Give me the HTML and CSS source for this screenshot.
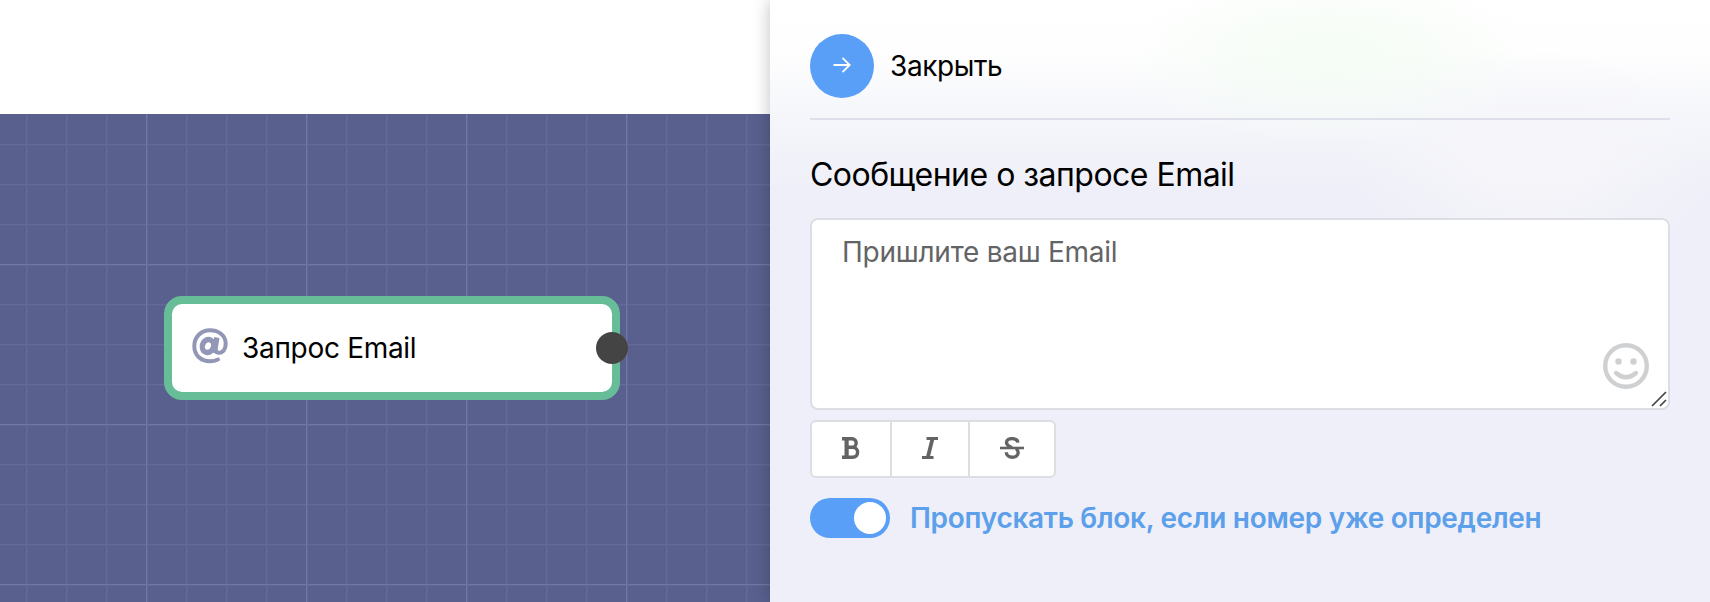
FILE: index.html
```html
<!DOCTYPE html>
<html lang="ru">
<head>
<meta charset="utf-8">
<title>Запрос Email</title>
<link rel="stylesheet" href="styles.css">
</head>
<body>
<div class="app">
  <main class="workspace">
    <header class="topbar"></header>
    <section class="canvas">
      <div class="node">
        <svg class="node-icon" width="36" height="36" viewBox="0 0 36 36" fill="none" stroke="#9397b7" stroke-linecap="round">
          <path stroke-width="4" d="M26 31.500C23.500 32.700 21 33.200 18 33.200C8.500 33.200 2.300 27 2.300 18S9 2.300 18 2.300S33.700 8 33.700 15.500C33.700 21 31 24.800 27.500 24.800C25.500 24.800 24 24 24 22.500"/>
          <ellipse cx="16" cy="18" rx="5.600" ry="6.600" transform="rotate(22 16 18)" stroke-width="5.400"/>
          <path stroke-width="5.400" stroke-linecap="butt" d="M24.800 9.500L22.300 25"/>
        </svg>
        <span class="node-title">Запрос Email</span>
        <span class="node-port"></span>
      </div>
    </section>
  </main>
  <aside class="panel">
    <header class="panel-head">
      <button class="close" type="button">
        <svg width="18" height="16" viewBox="0 0 18 16" fill="none" stroke="#fff" stroke-width="1.800"><path d="M.5 8H16.500M9.500 .8L16.700 8L9.500 15.200"/></svg>
      </button>
      <span class="close-label">Закрыть</span>
    </header>
    <h2 class="heading">Сообщение о запросе Email</h2>
    <div class="message">
      <span class="message-text">Пришлите ваш Email</span>
      <svg class="smile" width="46" height="46" viewBox="0 0 46 46" fill="none" stroke="#cfd0d2" stroke-width="4.400" stroke-linecap="round">
        <circle cx="23" cy="23" r="20.800"/><path d="M13 30Q23 38.500 33 30"/>
        <g fill="#cfd0d2" stroke="none"><circle cx="15.500" cy="18.500" r="3.200"/><circle cx="30.500" cy="18.500" r="3.200"/></g>
      </svg>
      <svg class="grip" width="16" height="16" viewBox="0 0 16 16" stroke="#444" stroke-width="1.700"><path d="M1 15L15 1M9 15L15 9"/></svg>
    </div>
    <div class="toolbar">
      <button class="tool" type="button">
        <svg width="18" height="22" viewBox="0 0 18 22" fill="none" stroke="#636466" stroke-width="3.400"><path d="M0 1.700H10C15.500 1.700 15.500 10.300 10 10.300H4.500M10.500 10.300C17.300 10.300 17.300 20.300 10.500 20.300H0"/><path stroke-width="4.200" d="M4.600 1.700V20.300"/></svg>
      </button>
      <button class="tool" type="button">
        <svg width="18" height="22" viewBox="0 0 18 22" fill="none" stroke="#636466" stroke-width="2.800"><path d="M5.500 1.500H17M1 20.500H12.500"/><path stroke-width="3.800" d="M11.500 1.500L6.800 20.500"/></svg>
      </button>
      <button class="tool tool-wide" type="button">
        <svg width="24" height="22" viewBox="0 0 24 22" fill="none" stroke="#636466" stroke-width="3.400"><path d="M0 11H24" stroke-width="2.600"/><path d="M17.800 5.600C17.200 .4 6.800 .2 6.500 5.400C6.500 8 8.800 9.200 12 10.500M6.300 15.200C6.300 21.800 18.200 21.800 18.200 15.500C18.200 13.500 17.500 12.500 16 11.500"/></svg>
      </button>
    </div>
    <label class="switch-row">
      <span class="switch"><span class="knob"></span></span>
      <span class="switch-label">Пропускать блок, если номер уже определен</span>
    </label>
  </aside>
</div>
</body>
</html>
```
FILE: styles.css
```css
* { box-sizing: border-box; }
body {
  margin: 0;
  font-family: Inter, "Liberation Sans", sans-serif;
  font-size: 28px;
  line-height: 34px;
  color: #000;
}
button { padding: 0; border: 0; background: none; }
svg { display: block; flex: none; }
.app { display: flex; width: 1710px; height: 602px; overflow: hidden; }
.workspace { display: flex; flex-direction: column; width: 770px; }
.topbar { height: 114px; background: #fff; }
.canvas {
  flex: 1;
  padding: 182px 0 0 164px;
  background-color: #59608e;
  background-image:
    linear-gradient(90deg, #7177a5 1px, #626896 1px, #626896 2px, transparent 2px),
    linear-gradient(#7177a5 1px, #626896 1px, #626896 2px, transparent 2px),
    linear-gradient(90deg, #646a98 1px, #5d6491 1px, #5d6491 2px, transparent 2px),
    linear-gradient(#646a98 1px, #5d6491 1px, #5d6491 2px, transparent 2px);
  background-size: 160px 160px, 160px 160px, 40px 40px, 40px 40px;
  background-position: 146px 0, 0 150px, 26px 0, 0 30px;
}
.node {
  position: relative;
  display: flex;
  align-items: center;
  gap: 14px;
  width: 456px;
  height: 104px;
  padding-left: 20px;
  border: 8px solid #68bd99;
  border-radius: 18px;
  background: #fff;
}
.node-icon { margin-top: -5px; }
.node-title { letter-spacing: -0.3px; }
.node-port {
  position: absolute;
  right: -16px;
  top: 28px;
  width: 32px;
  height: 32px;
  border-radius: 50%;
  background: #444;
}
.panel {
  position: relative;
  width: 940px;
  padding: 34px 40px 0;
  box-shadow: 0 0 16px rgba(0, 0, 0, .25);
  background:
    radial-gradient(ellipse 210px 90px at 560px 56px, rgba(244, 252, 244, .8) 20%, rgba(246, 252, 246, 0)),
    radial-gradient(ellipse 190px 110px at 765px 160px, rgba(246, 246, 250, .8) 30%, rgba(246, 246, 250, 0)),
    linear-gradient(#fff 0, #fefefe 50px, #f6f7fb 110px, #eeeff8 190px, #eeeff8 100%);
}
.panel-head {
  display: flex;
  gap: 16px;
  align-items: center;
  height: 86px;
  padding-bottom: 20px;
  border-bottom: 2px solid #dddfea;
}
.close {
  display: flex;
  align-items: center;
  justify-content: center;
  width: 64px;
  height: 64px;
  padding-bottom: 2px;
  border-radius: 50%;
  background: #599ff8;
}
.close-label { letter-spacing: -0.4px; }
.heading {
  margin: 34px 0 0;
  height: 64px;
  font-size: 32px;
  font-weight: 400;
  line-height: 42px;
  letter-spacing: -0.52px;
}
.message {
  position: relative;
  height: 192px;
  padding: 15px 30px;
  border: 2px solid #dddee3;
  border-radius: 8px;
  background: #fff;
  color: #636466;
}
.message-text { letter-spacing: -0.26px; }
.smile { position: absolute; right: 19px; bottom: 19px; }
.grip { position: absolute; right: 1px; bottom: 1px; }
.toolbar {
  display: flex;
  width: 246px;
  height: 58px;
  margin-top: 10px;
  border: 2px solid #dddee3;
  border-radius: 6px;
  background: #fff;
}
.tool {
  display: flex;
  align-items: center;
  justify-content: center;
  width: 80px;
  padding-bottom: 2px;
  border-right: 2px solid #dddee3;
}
.tool + .tool { width: 78px; }
.tool.tool-wide { width: 84px; border-right: 0; }
.switch-row { display: flex; align-items: center; gap: 20px; margin-top: 20px; }
.switch {
  display: flex;
  justify-content: flex-end;
  width: 80px;
  height: 40px;
  padding: 4px;
  border-radius: 20px;
  background: #599ff8;
}
.knob { width: 32px; height: 32px; border-radius: 50%; background: #fff; }
.switch-label { color: #5c9fea; font-weight: 600; letter-spacing: -0.29px; white-space: nowrap; }
```
